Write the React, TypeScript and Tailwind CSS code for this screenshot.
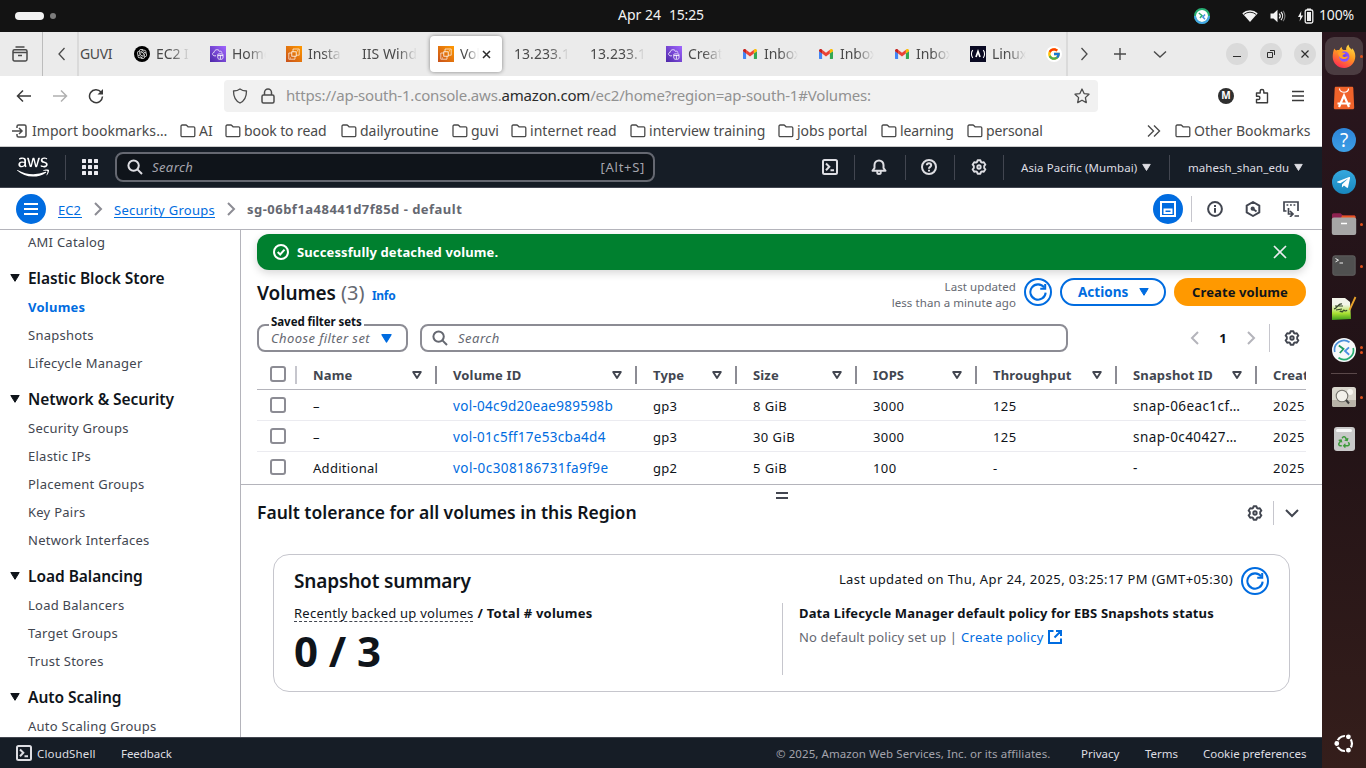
import React from "react";
import type { ReactNode } from "react";
import { FaAws, FaFirefoxBrowser, FaRecycle, FaTelegramPlane } from "react-icons/fa";
import { RiOpenaiFill } from "react-icons/ri";
import { FcGoogle } from "react-icons/fc";

/* ---------- shared icons ---------- */

function Icon({ children, size = 16, className = "", stroke = 2 }: { children: ReactNode; size?: number; className?: string; stroke?: number }) {
  return (
    <svg width={size} height={size} viewBox="0 0 16 16" fill="none" stroke="currentColor" strokeWidth={stroke} className={`shrink-0 ${className}`}>
      {children}
    </svg>
  );
}

const Caret = ({ className = "", w = 10 }: { className?: string; w?: number }) => (
  <svg width={w} height={w} viewBox="0 0 10 10" fill="currentColor" stroke="currentColor" strokeLinejoin="round" className={`shrink-0 ${className}`}>
    <path d="M.8 1.500h8.400L5 8.300z" />
  </svg>
);

const SortIcon = () => (
  <svg width="10" height="10" viewBox="0 0 10 10" fill="none" stroke="#424650" strokeWidth="1.9" strokeLinejoin="round" className="shrink-0">
    <path d="M1.2 2h7.6L5 8z" />
  </svg>
);

const Gear = ({ className = "" }: { className?: string }) => (
  <Icon className={className} stroke={1.9}>
    <circle cx="8" cy="8" r="1.7" />
    <path strokeLinejoin="round" d="M6.6 1.3h2.8l.5 1.6 1.2.7 1.7-.4 1.6 2.5-1.2 1.2v2.2l1.2 1.2-1.6 2.5-1.7-.4-1.2.7-.5 1.6H6.6l-.5-1.6-1.2-.7-1.7.4-1.6-2.5 1.2-1.2V6.9L1.6 5.700l1.600-2.500 1.700.4 1.200-.7z" />
  </Icon>
);

const Magnifier = ({ className = "" }: { className?: string }) => (
  <Icon className={className}>
    <circle cx="6.6" cy="6.6" r="5.2" />
    <path d="m10.400 10.400 4.600 4.600" />
  </Icon>
);

const Refresh = ({ size = 18 }: { size?: number }) => (
  <Icon size={size} stroke={1.8}>
    <path d="M14.800 8.500A6.800 6.800 0 1 1 13.500 4" />
    <path d="M14.400.8v4.400H10" />
  </Icon>
);

const Shell = () => (
  <Icon>
    <rect x="1" y="1" width="14" height="14" rx="1.500" />
    <path d="m4 4.500 3.300 3.300L4 11.200M8.500 11.300H12" />
  </Icon>
);

const Folder = () => (
  <Icon stroke={1.3}>
    <path strokeLinejoin="round" d="M1 12.500V3.200c0-.7.500-1.200 1.200-1.200h3.600c.6 0 .9.300 1.300.8l.9 1h5.600c.7 0 1.200.5 1.200 1.200v7.500c0 .7-.5 1.200-1.200 1.200H2.200c-.7 0-1.200-.5-1.200-1.200z" />
  </Icon>
);

/* ---------- favicons ---------- */

const Ec2Fav = () => (
  <svg width="16" height="16" viewBox="0 0 16 16" fill="none" stroke="#fff" strokeWidth=".8" className="shrink-0">
    <defs>
      <linearGradient id="orange" x1="0" y1="1" x2="1" y2="0"><stop stopColor="#c8511b" /><stop offset="1" stopColor="#f90" /></linearGradient>
    </defs>
    <rect width="16" height="16" fill="url(#orange)" stroke="none" />
    <rect x="5.800" y="5.800" width="4.400" height="4.400" />
    <path d="M7 5.800V3h6.200v6.200h-3M5.800 7H2.800v6.200H9v-3M11 4.800h1M4 12h1" opacity=".85" />
  </svg>
);

const PurpleFav = () => (
  <svg width="16" height="16" viewBox="0 0 16 16" fill="none" stroke="#fff" strokeWidth=".8" className="shrink-0">
    <defs>
      <linearGradient id="purple" x1="0" y1="1" x2="1" y2="0"><stop stopColor="#4d27a8" /><stop offset="1" stopColor="#a166ff" /></linearGradient>
    </defs>
    <rect width="16" height="16" fill="url(#purple)" stroke="none" />
    <path d="M6 9.800H4.200c-2.200-.5-2-3.300 0-3.500.1-2.900 4.300-3.700 5.300-.9 1.200-.6 2.300.1 2.400 1.200" />
    <path d="M7.800 8.300c0-.6 5.200-.6 5.200 0v3.600c0 1-1.300 1.500-2.600 1.500s-2.600-.5-2.600-1.500zM7.800 9.500H13M10.400 9v4" />
  </svg>
);

const GmailFav = () => (
  <svg width="16" height="16" viewBox="0 0 16 16" className="shrink-0">
    <path fill="#4285f4" d="M1 5v7.200c0 .5.400.9.900.9h2.200V7.200z" />
    <path fill="#34a853" d="M15 5v7.200c0 .5-.4.900-.9.900h-2.200V7.200z" />
    <path fill="#ea4335" d="M4.100 3.700 8 6.700l3.900-3v3.900L8 10.600l-3.900-3z" />
    <path fill="#c5221f" d="M1 4.500c0-1.600 1.700-2 2.700-1.200l.4.400v3.900L1 5.300z" />
    <path fill="#fbbc04" d="M15 4.500c0-1.600-1.700-2-2.700-1.200l-.4.400v3.900L15 5.300z" />
  </svg>
);

const ChatFav = () => (
  <span className="flex size-4 shrink-0 items-center justify-center rounded-full bg-black text-white"><RiOpenaiFill size={12} /></span>
);

const FccFav = () => (
  <svg width="16" height="16" viewBox="0 0 16 16" fill="none" stroke="#fff" strokeWidth="1.100" className="shrink-0">
    <rect width="16" height="16" fill="#0a0a23" stroke="none" />
    <path d="M2.800 4.200c-1.800 2-1.800 5.600 0 7.600M13.200 4.200c1.800 2 1.800 5.600 0 7.600" />
    <path d="M6 11 8 5.500l2 5.500" strokeWidth="1.700" />
  </svg>
);

const GoogleFav = () => (
  <span className="flex size-4 shrink-0 items-center justify-center rounded-full bg-white"><FcGoogle size={14} /></span>
);

/* ---------- desktop top bar ---------- */

const RemoteIcon = ({ size }: { size: number }) => (
  <svg width={size} height={size} viewBox="0 0 24 24" fill="none" className="shrink-0">
    <circle cx="12" cy="12" r="12" fill="#f7f9fa" />
    <path d="M2.800 14A9.400 9.400 0 0 1 17.500 4.300" stroke="#4a90d9" strokeWidth="1.700" />
    <path d="M21.200 10A9.400 9.400 0 0 1 6.500 19.700" stroke="#27ae73" strokeWidth="1.700" />
    <path d="m6.800 7.600 4.700 3.400-3.700 4" stroke="#1f9b62" strokeWidth="1.800" />
    <path d="m17 9.300-4 3.700 4.200 3.700" stroke="#4a90e2" strokeWidth="1.800" />
  </svg>
);

function TopBar() {
  return (
    <div className="flex h-8 shrink-0 items-center bg-[#131313] pr-[12px] text-[14px] text-[#f2f2f2]">
      <div className="ml-[15px] h-2 w-[29px] rounded-full bg-[#f2f2f2]" />
      <div className="ml-[6px] size-[6px] rounded-full bg-[#7d7d7d]" />
      <div className="ml-[562px] flex w-[90px] gap-[8px] pb-[2px] leading-none"><span>Apr 24</span><span className="tracking-[-0.2px]">15:25</span></div>
      <div className="ml-auto flex items-center">
        <svg width="16" height="16" viewBox="0 0 16 16" fill="none"><circle cx="8" cy="8" r="7" fill="#fff" stroke="#27ae73" strokeWidth="2" /><path d="M1 8a7 7 0 0 0 14 0" stroke="#45a5e8" strokeWidth="2" /><path d="m4.800 5 3.200 2.500L6 10" stroke="#27ae73" strokeWidth="1.500" /><path d="M11 6.500 8.800 9l2.200 2.300" stroke="#4a90e2" strokeWidth="1.500" /></svg>
        <svg width="16" height="14" viewBox="0 0 16 14" className="ml-[32px]"><path d="M.3 4.300a11.500 11.500 0 0 1 15.400 0L8 13z" fill="#f2f2f2" /><path d="M2 5.400a9.300 9.300 0 0 1 12 0" stroke="#131313" strokeWidth=".9" fill="none" /></svg>
        <svg width="16" height="14" viewBox="0 0 16 14" className="ml-[12px]" fill="none" stroke="#f2f2f2" strokeWidth="1.200"><path fill="#f2f2f2" stroke="none" d="M.5 4.500h3L7.500.8v12.400l-4-3.700h-3z" /><path d="M9.200 4.600a3.600 3.600 0 0 1 0 4.800M11 3a6 6 0 0 1 0 8" /><path d="M13 1.800a8 8 0 0 1 0 10.400" opacity=".45" /></svg>
        <svg width="16" height="16" viewBox="0 0 16 16" className="ml-[12px]"><path fill="#f2f2f2" d="M3.300 3 0 9h2.200l-.6 4.500L5.200 7.500H3z" /><rect x="7.200" y="2" width="7.600" height="13" rx="1.500" fill="none" stroke="#f2f2f2" strokeWidth="1.300" /><path fill="#f2f2f2" d="M9 4h4v9H9zM9 .5h4V2H9z" /></svg>
        <span className="ml-[5px] pb-[2px] leading-none tracking-[-0.16px]">100%</span>
      </div>
    </div>
  );
}

/* ---------- browser chrome ---------- */

type TabData = { label: string; icon?: ReactNode };
const tabs: TabData[] = [
  { label: "EC2 I", icon: <ChatFav /> },
  { label: "Home", icon: <PurpleFav /> },
  { label: "Insta", icon: <Ec2Fav /> },
  { label: "IIS Windo" },
  { label: "Vol", icon: <Ec2Fav /> },
  { label: "13.233.1" },
  { label: "13.233.1" },
  { label: "Creat", icon: <PurpleFav /> },
  { label: "Inbox", icon: <GmailFav /> },
  { label: "Inbox", icon: <GmailFav /> },
  { label: "Inbox", icon: <GmailFav /> },
  { label: "Linux", icon: <FccFav /> },
];

function Tab({ label, icon, active }: TabData & { active: boolean }) {
  return (
    <div className="flex h-[44px] w-[76px] shrink-0 items-center px-[2px]">
      <div className={`flex h-[36px] w-[72px] items-center gap-[6px] rounded-[4px] pl-[8px] ${active ? "bg-white shadow-[0_0_4px_rgba(0,0,0,0.45)]" : ""}`}>
        {icon}
        {active ? (
          <>
            <span className="w-[19px] overflow-hidden pb-[2px] [mask-image:linear-gradient(to_right,black_30%,transparent)]">{label}</span>
            <svg width="9" height="9" viewBox="0 0 9 9" stroke="#2b2b2b" strokeWidth="1.500" className="-ml-[3px]"><path d="m1 1 7 7M8 1 1 8" /></svg>
          </>
        ) : icon ? (
          <span className="w-[34px] overflow-hidden pb-[2px] tracking-[-0.1px] [mask-image:linear-gradient(to_right,black_45%,transparent)]">{label}</span>
        ) : (
          <span className="w-[55px] overflow-hidden pb-[2px] tracking-[0.05px] [mask-image:linear-gradient(to_right,black_65%,transparent)]">{label}</span>
        )}
      </div>
    </div>
  );
}

const WinButton = ({ children }: { children: ReactNode }) => (
  <div className="flex size-[22px] items-center justify-center rounded-full bg-[#dadada] text-[#2e2e2e]">{children}</div>
);

function TabBar() {
  return (
    <div className="flex h-[44px] shrink-0 items-center bg-[#ebebeb] text-[14px] text-[#4a4a4a]">
      <div className="flex h-full w-[43px] items-center border-r border-[#bcbcbc] pl-[12px]">
        <Icon stroke={1.500}><path d="M3.500 1h9" /><path d="M1 5.200c0-1 .5-1.500 1.500-1.500h11c1 0 1.500.5 1.500 1.500v8c0 1-.6 1.700-1.500 1.700h-11C1.600 14.900 1 14.200 1 13.200zM1 6.500h14M6 9.500h4" /></Icon>
      </div>
      <div className="flex w-[34px] justify-center pl-[3px]"><Icon stroke={1.300}><path d="M10.500 2 5 8l5.500 6" /></Icon></div>
      <div className="flex h-full w-[991px] items-center overflow-hidden border-x-2 border-[#dadada]">
        <div className="w-[45px] shrink-0 pb-[2px] pl-px tracking-[-0.39px]">GUVI</div>
        {tabs.map((t, i) => <Tab key={i} {...t} active={i === 4} />)}
        <div className="pl-[10px]"><GoogleFav /></div>
      </div>
      <div className="flex w-[254px] items-center pl-[8px]">
        <Icon stroke={1.300}><path d="M5.500 2 11 8l-5.500 6" /></Icon>
        <Icon stroke={1.400} className="ml-[20px]"><path d="M8 2v12M2 8h12" /></Icon>
        <Icon stroke={1.400} className="ml-[24px]"><path d="m2 5.500 6 5.500 6-5.500" /></Icon>
        <div className="ml-auto flex gap-[12px] pr-[6px]">
          <WinButton><svg width="10" height="10" viewBox="0 0 10 10" stroke="currentColor"><path d="M1 7.500h8" /></svg></WinButton>
          <WinButton><svg width="10" height="10" viewBox="0 0 10 10" stroke="currentColor" fill="none"><path d="M1.500 3.500h5v5h-5zM4 1.500h4.500V6" /></svg></WinButton>
          <WinButton><svg width="10" height="10" viewBox="0 0 10 10" stroke="currentColor" strokeWidth="1.200"><path d="m1.500 1.500 7 7M8.500 1.500l-7 7" /></svg></WinButton>
        </div>
      </div>
    </div>
  );
}

function AddressBar() {
  return (
    <div className="flex h-[39px] shrink-0 items-center bg-white text-[#3a3a3a]">
      <Icon stroke={1.500} className="ml-[16px]"><path d="M15 8H1.500M7 2.500 1.500 8 7 13.500" /></Icon>
      <Icon stroke={1.500} className="ml-[20px] text-[#b0b0b0]"><path d="M1 8h13.500M9 2.500 14.500 8 9 13.500" /></Icon>
      <Icon stroke={1.500} className="ml-[20px]"><path d="M14.500 8.500A6.500 6.500 0 1 1 13 4" /><path fill="currentColor" stroke="none" d="M15 1v5.500H9.500z" /></Icon>
      <div className="ml-[120px] mt-px flex h-8 w-[874px] items-center rounded-[4px] bg-[#f1f1f1] px-[8px] text-[#4c4c4c]">
        <Icon stroke={1.300}><path strokeLinejoin="round" d="M8 1c1.500 1.200 4 2 6.500 2 0 5.500-1 9.500-6.500 12C2.500 12.500 1.500 8.500 1.500 3 4 3 6.500 2.200 8 1z" /></Icon>
        <Icon stroke={1.500} className="ml-[12px]"><rect x="2" y="7" width="12" height="8" rx="1.500" /><path d="M4.500 7V4.500a3.500 3.500 0 0 1 7 0V7" /></Icon>
        <span className="ml-[10px] pb-[2px] text-[15px] tracking-[-0.19px] text-[#929292]">
          https://ap-south-1.console.aws.<span className="text-[#2b2b2b]">amazon.com</span>/ec2/home?region=ap-south-1#Volumes:
        </span>
        <Icon stroke={1.300} className="ml-auto"><path strokeLinejoin="round" d="m8 1 2.100 4.600 4.900.6-3.600 3.400.9 5L8 12.200l-4.300 2.400.9-5L1 6.200l4.900-.6z" /></Icon>
      </div>
      <div className="ml-[120px] flex size-4 items-center justify-center rounded-full bg-[#2f2f2f] text-[10px] font-bold text-white">M</div>
      <Icon stroke={1.400} className="ml-[20px]"><path strokeLinejoin="round" d="M2.500 14.800v-3.300h1.800a1.600 1.600 0 0 0 0-3.200H2.500V5h3.700V3.300a1.800 1.800 0 0 1 3.600 0V5h3.700v9.800z" /></Icon>
      <Icon stroke={1.300} className="ml-[20px]"><path d="M2 3.500h12M2 8h12M2 12.500h12" /></Icon>
    </div>
  );
}

function Bookmark({ label, w }: { label: string; w: string }) {
  return <div className={`flex items-center gap-[3px] ${w}`}><Folder />{label}</div>;
}

function Bookmarks() {
  return (
    <div className="flex h-8 shrink-0 items-center border-b border-[#cccccc] bg-white pl-[12px] text-[14px] text-[#4a4a4a]">
      <div className="flex w-[168px] items-center gap-[4px] tracking-[0.05px]">
        <Icon stroke={1.500}><path d="M5 5V3.500C5 2.600 5.600 2 6.500 2h6c.9 0 1.500.6 1.500 1.500v9c0 .9-.6 1.500-1.500 1.500h-6c-.9 0-1.500-.6-1.500-1.500V11M0 8h9.500M7 5l3 3-3 3" /></Icon>
        Import bookmarks…
      </div>
      <Bookmark label="AI" w="w-[45px]" />
      <Bookmark label="book to read" w="w-[116px] tracking-[-0.1px]" />
      <Bookmark label="dailyroutine" w="w-[111px]" />
      <Bookmark label="guvi" w="w-[59px]" />
      <Bookmark label="internet read" w="w-[119px] tracking-[0.05px]" />
      <Bookmark label="interview training" w="w-[148px] tracking-[0.05px]" />
      <Bookmark label="jobs portal" w="w-[103px]" />
      <Bookmark label="learning" w="w-[86px] tracking-[-0.1px]" />
      <Bookmark label="personal" w="w-[179px] tracking-[-0.1px]" />
      <Icon stroke={1.400} className="mr-[13px]"><path d="m2 2.500 5.500 5.500L2 13.500M8 2.500 13.500 8 8 13.500" /></Icon>
      <Bookmark label="Other Bookmarks" w="" />
    </div>
  );
}

/* ---------- console header ---------- */

const Sep = ({ className = "" }: { className?: string }) => <div className={`h-[25px] w-px shrink-0 bg-[#424650] ${className}`} />;

function AwsHeader() {
  return (
    <div className="flex h-[41px] shrink-0 items-center border-b border-[#424650] bg-[#161d26] text-[11.5px] text-[#dedee3]">
      <div className="ml-[17px] w-[32px] text-white"><FaAws size={32} /></div>
      <Sep className="ml-[16px]" />
      <svg width="16" height="16" viewBox="0 0 16 16" fill="#ebebf0" className="ml-[16px] shrink-0">
        {[0, 6, 12].map((y) => [0, 6, 12].map((x) => <rect key={`${x}-${y}`} x={x} y={y} width="4" height="4" rx=".5" />))}
      </svg>
      <div className="ml-[17px] flex h-[30px] w-[540px] shrink-0 items-center rounded-[8px] border-2 border-[#656871] bg-[#0f141a] pl-[10px] pr-[8px] text-[13px]">
        <Magnifier className="text-[#dedee3]" />
        <span className="ml-[9px] pt-[2px] italic tracking-[0.4px] text-[#a4a4ad]">Search</span>
        <span className="ml-auto pt-[2px] tracking-[0.7px] text-[#a4a4ad]">[Alt+S]</span>
      </div>
      <div className="ml-[167px] flex items-center">
        <Shell />
        <Sep className="ml-[16px]" />
        <Icon className="ml-[16px]"><path strokeLinejoin="round" d="M1.500 11.800h13L12.500 9V6a4.500 4.500 0 0 0-9 0v3zM6.300 12.500v1.200c0 .7.600 1.200 1.700 1.200s1.700-.5 1.700-1.200v-1.200" /></Icon>
        <Sep className="ml-[18px]" />
        <Icon className="ml-[15px]"><circle cx="8" cy="8" r="7" /><path d="M5.800 6.300C5.800 3.700 10.200 3.700 10.200 6.300 10.200 8 8 7.800 8 9.800M8 10.800v1.800" /></Icon>
        <Sep className="ml-[17px]" />
        <Gear className="ml-[16px]" />
        <Sep className="ml-[16px]" />
      </div>
      <span className="ml-[17px] w-[117px] pt-[2px] tracking-[0.1px]">Asia Pacific (Mumbai)</span>
      <Caret className="ml-[4px]" w={9} />
      <Sep className="ml-[18px]" />
      <span className="ml-[18px] w-[101px] pt-[2px] tracking-[0.05px]">mahesh_shan_edu</span>
      <Caret className="ml-[5px]" w={9} />
    </div>
  );
}

const Chev = () => <Icon className="text-[#8c8c94]"><path d="m5 2 6 6-6 6" /></Icon>;

function Breadcrumbs() {
  return (
    <div className="flex h-[42px] shrink-0 items-center border-b border-[#b4b4bb] bg-white text-[13px] text-[#424650]">
      <div className="ml-[16px] flex size-[30px] items-center justify-center rounded-full bg-[#006ce0] text-white">
        <Icon><path d="M1 3h14M1 8h14M1 13h14" /></Icon>
      </div>
      <span className="ml-[12px] h-[18px] w-[24px] border-b border-[#006ce0] leading-[20px] text-[#006ce0]">EC2</span>
      <span className="mx-[8px]"><Chev /></span>
      <span className="h-[18px] w-[101px] border-b border-[#006ce0] leading-[20px] tracking-[0.28px] text-[#006ce0]">Security Groups</span>
      <span className="mx-[8px]"><Chev /></span>
      <span className="pt-[2px] text-[13px] font-bold tracking-[0.48px] text-[#656871]">sg-06bf1a48441d7f85d - default</span>
      <div className="ml-auto flex items-center pr-[23px]">
        <div className="flex size-[30px] items-center justify-center rounded-full bg-[#006ce0] text-white">
          <Icon><path d="M1 1h14v14H1z" /><path d="M4.500 8.500h7v3.500h-7z" /></Icon>
        </div>
        <div className="ml-[8px] h-[26px] w-px bg-[#c6c6cd]" />
        <Icon className="ml-[15px]"><circle cx="8" cy="8" r="6.900" /><path d="M8 7v4.800M8 4v2" /></Icon>
        <Icon className="ml-[22px]"><path strokeLinejoin="round" d="m8 1 6.300 3.600v6.800L8 15l-6.300-3.600V4.600z" /><circle cx="7.700" cy="7.700" r="2.100" fill="currentColor" stroke="none" /><path d="m8 8 3.500 2.500" /></Icon>
        <Icon className="ml-[22px]"><path d="M3.500 10H1V1h14v9M5.500 7v6h4M7 10l3 3-3 3M11.500 15H16" strokeWidth="1.700" /><path d="M3.500 4h1.800M7 4h1.800M10.500 4h1.800" strokeWidth="1.700" /></Icon>
      </div>
    </div>
  );
}

/* ---------- sidebar ---------- */

const sections: { title: string; items: string[] }[] = [
  { title: "Elastic Block Store", items: ["Volumes", "Snapshots", "Lifecycle Manager"] },
  { title: "Network & Security", items: ["Security Groups", "Elastic IPs", "Placement Groups", "Key Pairs", "Network Interfaces"] },
  { title: "Load Balancing", items: ["Load Balancers", "Target Groups", "Trust Stores"] },
  { title: "Auto Scaling", items: ["Auto Scaling Groups"] },
];

function Sidebar() {
  return (
    <div className="w-[241px] shrink-0 overflow-hidden border-r border-[#b4b4bb] text-[13px] tracking-[0.25px] text-[#424650]">
      <div className="flex h-[26px] items-center pl-[28px]">AMI Catalog</div>
      {sections.map((s) => (
        <div key={s.title}>
          <div className="flex h-[37px] items-center pl-[10px] pt-[7px] text-[15.5px] font-semibold tracking-[-0.04px] text-[#0f141a]">
            <Caret className="mr-[8px]" /><span className="pt-[2px]">{s.title}</span>
          </div>
          {s.items.map((i) => (
            <div key={i} className={`flex h-[28px] items-center pl-[28px] pt-[2px] ${i === "Volumes" ? "font-bold text-[#006ce0]" : ""}`}>{i}</div>
          ))}
        </div>
      ))}
    </div>
  );
}

/* ---------- volumes table ---------- */

const columns: { label: string; w: string }[] = [
  { label: "Name", w: "w-[140px]" },
  { label: "Volume ID", w: "w-[200px]" },
  { label: "Type", w: "w-[100px]" },
  { label: "Size", w: "w-[120px]" },
  { label: "IOPS", w: "w-[120px]" },
  { label: "Throughput", w: "w-[140px]" },
  { label: "Snapshot ID", w: "w-[140px]" },
];

const rows = [
  ["–", "vol-04c9d20eae989598b", "gp3", "8 GiB", "3000", "125", "snap-06eac1cf…"],
  ["–", "vol-01c5ff17e53cba4d4", "gp3", "30 GiB", "3000", "125", "snap-0c40427…"],
  ["Additional", "vol-0c308186731fa9f9e", "gp2", "5 GiB", "100", "-", "-"],
];

const idTracking = ["tracking-[0.3px]", "tracking-[0.3px]", "tracking-[0.43px]"];

const Checkbox = () => <div className="ml-[13px] size-4 shrink-0 rounded-[3px] border-2 border-[#8c8c94] bg-white" />;

function VolumesTable() {
  return (
    <div className="mt-[9px] w-[1049px] overflow-hidden text-[13px] text-[#0f141a]">
      <div className="flex h-[29px] items-center border-b border-[#b4b4bb] font-bold tracking-[0.15px] text-[#424650]">
        <div className="flex w-[40px] shrink-0 items-center justify-between"><span className="pb-[2px]"><Checkbox /></span><div className="h-[18px] w-[2px] bg-[#c6c6cd]" /></div>
        {columns.map((c) => (
          <div key={c.label} className={`flex shrink-0 items-center pl-[16px] ${c.w}`}>
            <span className="pt-[2px]">{c.label}</span>
            <span className="ml-auto mr-[13px]"><SortIcon /></span>
            <div className="h-[18px] w-[2px] bg-[#8c8c94]" />
          </div>
        ))}
        <div className="pl-[16px] pt-[2px]">Created</div>
      </div>
      {rows.map((r, n) => (
        <div key={n} className={`flex h-[31px] items-center ${n < 2 ? "border-b border-[#ebebf0]" : ""}`}>
          <div className="w-[40px] shrink-0 pb-px"><Checkbox /></div>
          {r.map((v, i) => (
            <div key={i} className={`shrink-0 pl-[16px] pt-[2px] leading-[21px] ${columns[i].w} ${i === 1 ? `text-[13.5px] text-[#006ce0] ${idTracking[n]}` : i === 6 ? "text-[13.5px] tracking-[0.42px]" : i > 2 ? "tracking-[0.42px]" : "tracking-[0.3px]"}`}>{v}</div>
          ))}
          <div className="pl-[16px] pt-[2px] leading-[21px] tracking-[0.6px]">2025</div>
        </div>
      ))}
    </div>
  );
}

function VolumesPanel() {
  return (
    <div className="flex h-[255px] shrink-0 flex-col border-b border-[#b4b4bb] pl-[16px] pr-[16px] pt-[4px]">
      <div className="flex h-[36px] shrink-0 items-center rounded-[12px] bg-[#00802f] px-[16px] text-[13px] font-bold tracking-[0.1px] text-white shadow-[0_3px_8px_rgba(0,0,0,0.16)]">
        <Icon><circle cx="8" cy="8" r="7" /><path d="m4.700 8 2.500 2.500L11.500 5.700" /></Icon>
        <span className="ml-[8px] pt-[2px] tracking-[0.12px]">Successfully detached volume.</span>
        <Icon stroke={1.700} className="ml-auto mr-[2px] text-[#ebebf0]"><path d="m2 2 12 12M14 2 2 14" /></Icon>
      </div>
      <div className="mt-[8px] flex h-[28px] shrink-0 items-center">
        <div className="flex h-[28px] items-center pt-[2px] text-[19px] leading-[28px] text-[#0f141a]">
          <span className="w-[84px] font-semibold tracking-[-0.1px]">Volumes</span>
          <span className="w-[31px] text-[20px] text-[#656871]">(3)</span>
          <span className="mt-[6px] text-[12px] font-bold tracking-[-0.3px] text-[#006ce0]">Info</span>
        </div>
        <div className="ml-auto mt-[6px] text-right text-[11.500px] leading-[16px] tracking-[0.07px] text-[#656871]">Last updated<br />less than a minute ago</div>
        <div className="ml-[8px] flex h-[28px] w-[28px] items-center justify-center rounded-full border-2 border-[#006ce0] text-[#006ce0]"><Refresh /></div>
        <div className="ml-[8px] flex h-[28px] w-[106px] items-center rounded-full border-2 border-[#006ce0] pl-[16px] text-[13.500px] font-bold text-[#006ce0]">
          <span className="w-[61px] pt-px">Actions</span><Caret />
        </div>
        <div className="ml-[8px] flex h-[28px] w-[132px] items-center justify-center rounded-full bg-[#ff9900] pt-[2px] text-[13px] font-bold tracking-[0.1px] text-[#0f141a]">Create volume</div>
      </div>
      <div className="mt-[18px] flex h-[28px] shrink-0 items-center text-[13px] text-[#656871]">
        <div className="relative flex h-[28px] w-[151px] items-center rounded-[8px] border-2 border-[#8c8c94] pl-[12px]">
          <span className="absolute left-[10px] top-[-13px] bg-white px-[2px] text-[11.500px] font-bold leading-[18px] tracking-[-0.05px] text-[#0f141a]">Saved filter sets</span>
          <span className="w-[110px] pt-[2px] italic tracking-[0.42px]">Choose filter set</span>
          <Caret className="text-[#006ce0]" w={11} />
        </div>
        <div className="ml-[12px] flex h-[28px] w-[648px] items-center rounded-[8px] border-2 border-[#8c8c94] pl-[10px]">
          <Magnifier /><span className="ml-[10px] pt-[2px] italic tracking-[0.5px]">Search</span>
        </div>
        <div className="ml-auto flex h-full items-center">
          <Icon className="text-[#b4b4bb]"><path d="m11 2-6 6 6 6" /></Icon>
          <span className="w-[40px] pt-px text-center font-bold text-[#0f141a]">1</span>
          <Icon className="text-[#b4b4bb]"><path d="m5 2 6 6-6 6" /></Icon>
          <div className="ml-[10px] h-full w-px bg-[#c6c6cd]" />
          <Gear className="ml-[14px] mr-[6px] text-[#424650]" />
        </div>
      </div>
      <VolumesTable />
    </div>
  );
}

/* ---------- split panel ---------- */

function SplitPanel() {
  return (
    <div className="flex flex-1 flex-col pt-[7px] text-[13px] text-[#0f141a]">
      <div className="flex h-[7px] flex-col items-center justify-between pl-px">
        <div className="h-[2px] w-[12px] bg-[#424650]" /><div className="h-[2px] w-[12px] bg-[#424650]" />
      </div>
      <div className="mt-[2px] flex h-[24px] items-center pl-[16px] pr-[22px] text-[#424650]">
        <span className="pb-[2px] text-[17.500px] font-semibold tracking-[-0.01px] text-[#0f141a]">Fault tolerance for all volumes in this Region</span>
        <Gear className="ml-auto" />
        <div className="ml-[10px] h-[24px] w-px bg-[#c6c6cd]" />
        <Icon className="ml-[10px]"><path d="m2 5 6 6 6-6" /></Icon>
      </div>
      <div className="ml-[32px] mt-[29px] h-[138px] w-[1017px] shrink-0 rounded-[16px] border border-[#c6c6cd] px-[20px] pt-[12px]">
        <div className="flex h-[28px] items-center">
          <span className="text-[19px] font-semibold tracking-[-0.16px]">Snapshot summary</span>
          <span className="ml-auto pb-[3px] tracking-[0.4px]">Last updated on Thu, Apr 24, 2025, 03:25:17 PM (GMT+05:30)</span>
          <div className="ml-[8px] flex size-[28px] items-center justify-center rounded-full border-2 border-[#006ce0] text-[#006ce0]"><Refresh /></div>
        </div>
        <div className="mt-[8px] flex h-[72px]">
          <div className="flex w-[489px] flex-col border-r border-[#c6c6cd]">
            <div className="flex h-[20px] items-start leading-[20px]">
              <span className="h-[19px] border-b border-dashed border-[#424650] tracking-[0.24px]">Recently backed up volumes</span>
              <span className="ml-[4px] font-bold tracking-[0.25px]">/ Total # volumes</span>
            </div>
            <div className="mt-[5px] text-[42px] font-bold leading-[46px] tracking-[-0.05px]">0 / 3</div>
          </div>
          <div className="pl-[16px]">
            <div className="font-bold leading-[20px] tracking-[0.13px]">Data Lifecycle Manager default policy for EBS Snapshots status</div>
            <div className="mt-[4px] flex h-[20px] items-center text-[#656871]">
              <span className="w-[162px] pt-[2px] tracking-[0.13px]">No default policy set up |</span>
              <span className="pt-[2px] tracking-[0.3px] text-[#006ce0]">Create policy</span>
              <Icon className="ml-[3px] text-[#006ce0]"><path d="M6.500 2H2v12h12V9.500M9 2h5v5M14 2 7.500 8.500" /></Icon>
            </div>
          </div>
        </div>
      </div>
    </div>
  );
}

function Footer() {
  return (
    <div className="flex h-[31px] shrink-0 items-center border-t border-[#424650] bg-[#161d26] pl-[16px] pr-[16px] text-[11.500px] text-[#dedee3]">
      <Shell />
      <span className="ml-[5px] w-[84px] pt-px tracking-[0.15px]">CloudShell</span>
      <span className="pt-px tracking-[-0.05px]">Feedback</span>
      <span className="ml-auto w-[305px] pt-px tracking-[0.07px] text-[#a4a4ad]">© 2025, Amazon Web Services, Inc. or its affiliates.</span>
      <span className="w-[64px] pt-px">Privacy</span>
      <span className="w-[58px] pt-px">Terms</span>
      <span className="w-[103px] pt-px tracking-[-0.03px]">Cookie preferences</span>
    </div>
  );
}

/* ---------- dock ---------- */

function DockItem({ children, dots = 0, active = false }: { children: ReactNode; dots?: number; active?: boolean }) {
  return (
    <div className="relative flex h-[42px] w-[44px] shrink-0 items-center justify-center">
      <div className={`flex size-[38px] items-center justify-center rounded-[9px] ${active ? "bg-[#4b3c41]" : ""}`}>{children}</div>
      <div className="absolute right-[3px] flex flex-col gap-[2px]">
        {Array.from({ length: dots }, (_, i) => <div key={i} className="size-[3px] rounded-full bg-[#e0501b]" />)}
      </div>
    </div>
  );
}

function Dock() {
  return (
    <div className="flex w-[44px] shrink-0 flex-col bg-linear-to-b from-[#2a161e] via-[#211216] to-[#351e1b] pt-[3px]">
      <DockItem active dots={1}>
        <svg width="24" height="24" viewBox="0 0 24 24">
          <defs>
            <linearGradient id="flame" x1=".8" y1="0" x2=".3" y2="1"><stop stopColor="#ffe14a" /><stop offset=".45" stopColor="#ff9a1f" /><stop offset="1" stopColor="#ff2a55" /></linearGradient>
            <radialGradient id="globe"><stop stopColor="#6a3df5" /><stop offset="1" stopColor="#9059ff" /></radialGradient>
          </defs>
          <path fill="url(#flame)" d="M2.300 4.500c.6.900 1.200 1.500 1.900 2 .8-.5 2-.6 3-.4.5-1.300 1.400-2.500 2.500-3.300-.1 1.500.5 2.600 1.800 3.300h2.700c-.4-2.100.5-4.200 2.300-5.600.3 2.500 1.700 3.700 3.200 5.200.3-.5.300-1 .2-1.700 2.300 2.300 3.400 5.200 3.400 8.300C23.300 18.800 18.500 24 12.200 24S.7 19.200.7 13c0-3.200.5-6 1.600-8.500z" />
          <circle cx="12.300" cy="12.500" r="5.200" fill="url(#globe)" />
          <path fill="#ffa126" d="M6 8.500c2.300-1 4-.6 5.200.3l2.300.3c-.3 1.500-2.500 1.300-3 2.400-.2.900.7 1.500 2 1.400 1.500-.2 2.200-.7 3.500-.2-1 2.100-3.500 3-6 2C7.500 13.700 6.200 11.500 6 8.500z" />
        </svg>
      </DockItem>
      <DockItem>
        <svg width="22" height="24" viewBox="0 0 22 24" fill="none"><path d="M3 .8h16c.8 0 1.200.5 1.300 1.300l.9 19.300c0 1-.6 1.800-1.500 1.800H2.300c-1 0-1.600-.8-1.500-1.800l.9-19.300C1.800 1.300 2.200.8 3 .8z" fill="#f0632b" /><path d="M6.500 2.500c0 5 9 5 9 0" stroke="#fff" strokeWidth="1.200" /><path d="M6 21l5-11.500L16 21M4.500 17.500h13" stroke="#fff" strokeWidth="2.200" /></svg>
      </DockItem>
      <DockItem><span className="flex size-6 items-center justify-center rounded-full bg-linear-to-b from-[#2d84d8] to-[#3d9fe6] text-[19px] leading-none text-white">?</span></DockItem>
      <DockItem><span className="flex size-6 items-center justify-center rounded-full bg-linear-to-b from-[#35a8df] to-[#1786bd] pr-[2px] text-white"><FaTelegramPlane size={15} /></span></DockItem>
      <DockItem dots={1}>
        <svg width="26" height="24" viewBox="0 0 26 24"><path d="M1 3c0-1 .6-1.700 1.500-1.700h7L12 3.500h11c1 0 1.500.7 1.500 1.500v6H1z" fill="#8e2150" /><path d="M11 3.500h12c1 0 1.500.7 1.500 1.500v6H8z" fill="#e95420" /><rect x=".8" y="5.500" width="24.400" height="17.500" rx="2" fill="#a6a6a6" /><path d="M10 11.500h6" stroke="#fff" strokeWidth="1.500" /></svg>
      </DockItem>
      <DockItem dots={1}>
        <svg width="24" height="22" viewBox="0 0 24 22" fill="none"><rect x=".8" y=".8" width="22.400" height="19.500" rx="2" fill="#505050" stroke="#686868" strokeWidth=".8" /><path d="m3.500 3.500 3 1.700-3 1.700M7.500 8h3.500" stroke="#eee" /></svg>
      </DockItem>
      <DockItem>
        <svg width="26" height="25" viewBox="0 0 26 25" fill="none"><defs><linearGradient id="pad" x1="0" y1="0" x2="0" y2="1"><stop offset=".3" stopColor="#f2f4ea" /><stop offset=".7" stopColor="#a8e032" /><stop offset="1" stopColor="#3f9c1c" /></linearGradient></defs><path d="M1 2h13l5 4 1 17-19 1z" fill="url(#pad)" /><path d="M3 13c4-1 4-6 8-5M4 10h8M5 14l6-1M9 16c1-3 2 2 3-1s2 2 4-1" stroke="#34452a" strokeWidth="1.200" /><path d="m24.500 1-6 13" stroke="#e9a32b" strokeWidth="1.800" /></svg>
      </DockItem>
      <DockItem dots={2}><RemoteIcon size={24} /></DockItem>
      <div className="ml-[9px] mt-[2px] h-px w-[26px] bg-[#5a484a]" />
      <div className="mt-[2px]">
        <DockItem dots={1}>
          <svg width="26" height="22" viewBox="0 0 26 22" fill="none"><rect x="1" y="1" width="24" height="20" rx="2.500" fill="#d9d6cd" /><path d="M1 14h24v4.500a2.500 2.500 0 0 1-2.500 2.500h-19A2.500 2.500 0 0 1 1 18.500z" fill="#b8b3a8" /><circle cx="19" cy="6" r="3" fill="#f6f4ef" /><circle cx="11" cy="10" r="5.800" fill="#f3f1eb" stroke="#77756f" strokeWidth="1.100" /><path d="m15 14 3 3.500" stroke="#3d3d3d" strokeWidth="2" /></svg>
        </DockItem>
      </div>
      <DockItem>
        <span className="flex h-[24px] w-[21px] flex-col items-center rounded-[3px] bg-[#c9c9c9] text-[#3c9a3a]"><span className="mb-[4px] mt-[2px] h-[3px] w-[16px] rounded-sm bg-[#f7f7f7]" /><FaRecycle size={12} /></span>
      </DockItem>
      <div className="mb-[14px] ml-[12px] mt-auto">
        <svg width="21" height="21" viewBox="0 0 21 21" fill="none"><circle cx="10.500" cy="10.500" r="7.500" stroke="#fff" strokeWidth="2.200" />{[[2.800, 10.500], [14.400, 3.800], [14.400, 17.200]].map(([x, y]) => <circle key={`${x}${y}`} cx={x} cy={y} r="3" fill="#fff" stroke="#331d1b" strokeWidth="1.200" />)}</svg>
      </div>
    </div>
  );
}

export default function App() {
  return (
    <div className="flex h-[768px] w-[1366px] flex-col overflow-hidden whitespace-nowrap bg-white font-['Noto_Sans',sans-serif]">
      <TopBar />
      <div className="flex min-h-0 flex-1">
        <div className="flex w-[1322px] shrink-0 flex-col">
          <TabBar />
          <AddressBar />
          <Bookmarks />
          <AwsHeader />
          <Breadcrumbs />
          <div className="flex min-h-0 flex-1 bg-white">
            <Sidebar />
            <div className="flex w-[1081px] flex-col overflow-hidden">
              <VolumesPanel />
              <SplitPanel />
            </div>
          </div>
          <Footer />
        </div>
        <Dock />
      </div>
    </div>
  );
}
